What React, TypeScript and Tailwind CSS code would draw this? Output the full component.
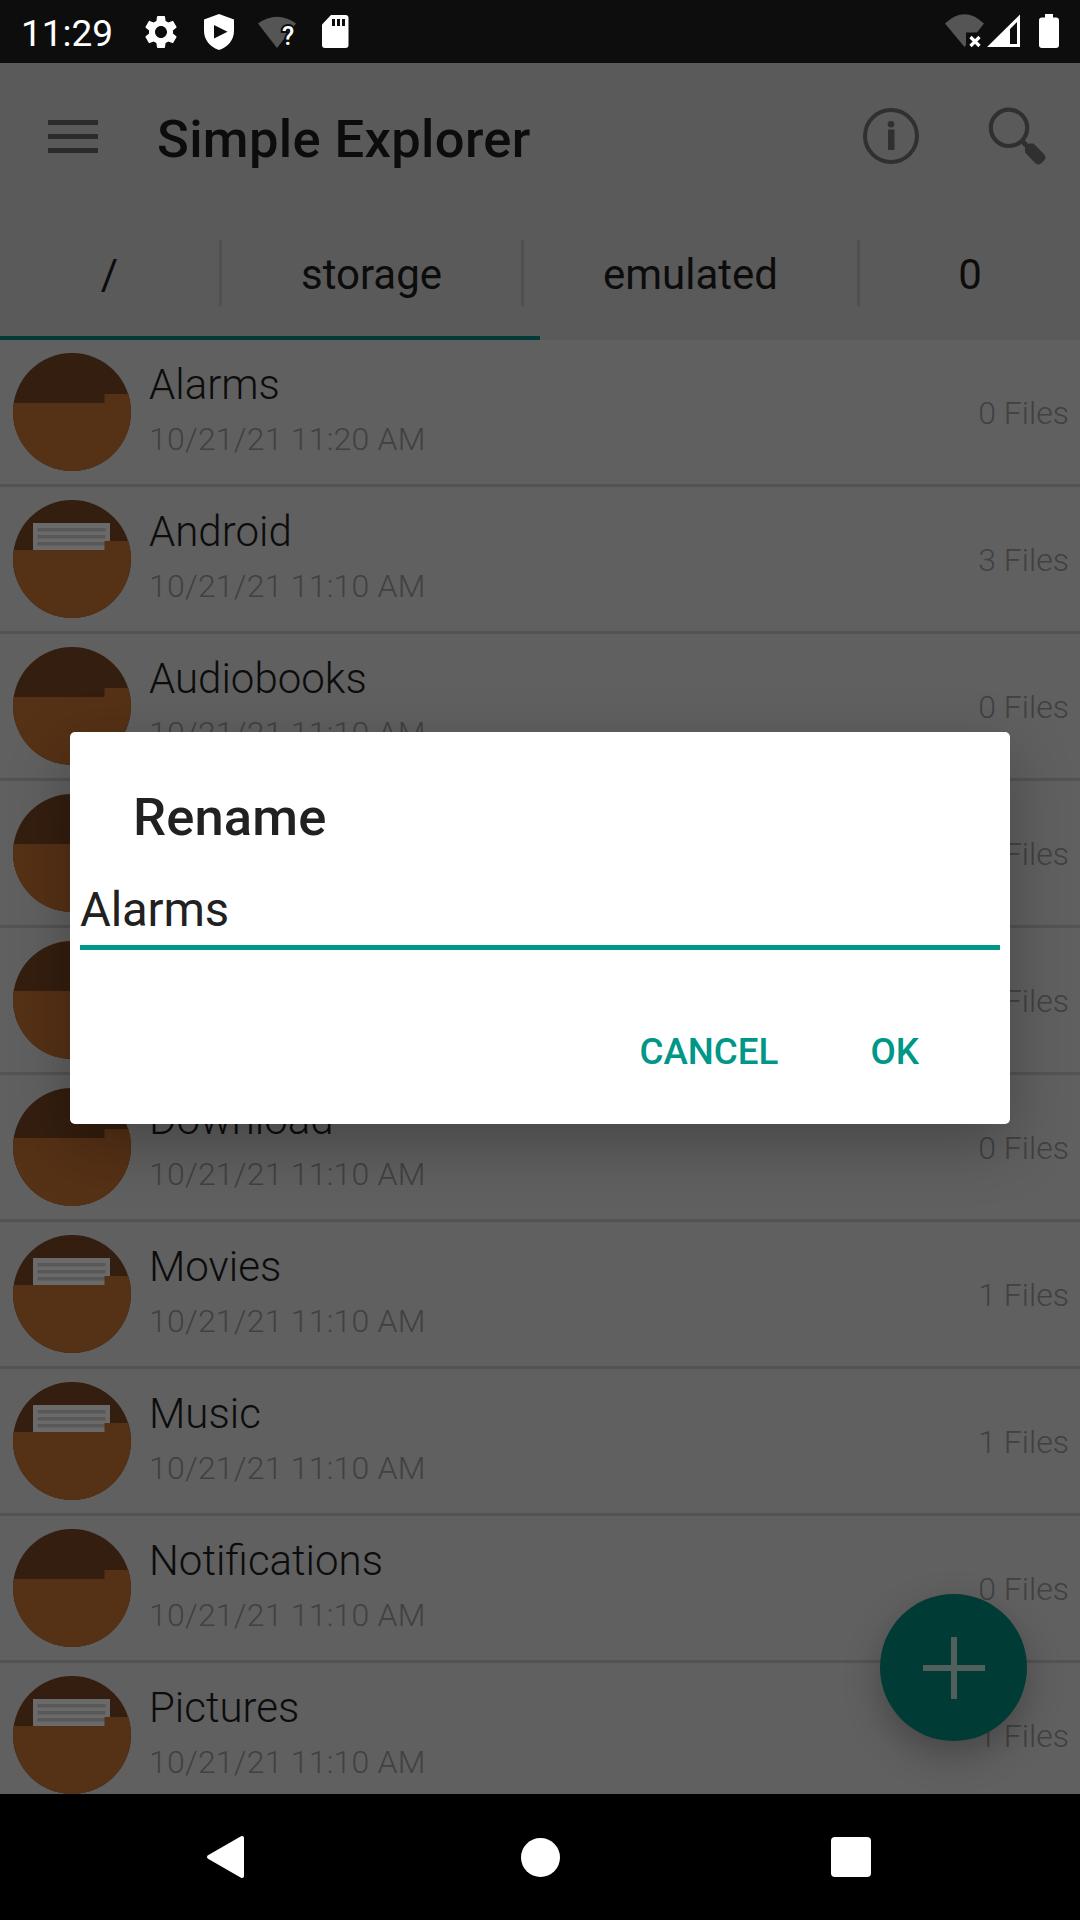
import React from "react";
import { MdSettings } from "react-icons/md";

type Entry = { name: string; date: string; files: string; full?: boolean };

const entries: Entry[] = [
  { name: "Alarms", date: "10/21/21 11:20 AM", files: "0 Files" },
  { name: "Android", date: "10/21/21 11:10 AM", files: "3 Files", full: true },
  { name: "Audiobooks", date: "10/21/21 11:10 AM", files: "0 Files" },
  { name: "DCIM", date: "10/21/21 11:10 AM", files: "0 Files" },
  { name: "Documents", date: "10/21/21 11:10 AM", files: "0 Files" },
  { name: "Download", date: "10/21/21 11:10 AM", files: "0 Files" },
  { name: "Movies", date: "10/21/21 11:10 AM", files: "1 Files", full: true },
  { name: "Music", date: "10/21/21 11:10 AM", files: "1 Files", full: true },
  { name: "Notifications", date: "10/21/21 11:10 AM", files: "0 Files" },
  { name: "Pictures", date: "10/21/21 11:10 AM", files: "1 Files", full: true },
];

function StatusBar() {
  return (
    <header className="flex h-[63px] shrink-0 items-center bg-[#0d0d0d] text-white">
      <span className="ml-[21px] w-[120px] pt-[4px] text-[37px] leading-none">11:29</span>
      <MdSettings className="size-10 shrink-0" />
      <svg className="ml-[18px] h-[63px] w-10 shrink-0" viewBox="199 0 40 63">
        <path fill="#fff" d="M219 14l15 5.5v11c0 9.500-6 16.500-15 19.500-9-3-15-10-15-19.500v-11z" />
        <path fill="#0d0d0d" d="M214 25v13.500l13.500-6.750z" />
      </svg>
      <svg className="ml-[18px] h-[63px] w-[40px] shrink-0" viewBox="257 0 40 63">
        <path fill="#555" d="M258 23.500Q277 10 296 23.500L277 48z" />
        <text x="282" y="45" fontSize="25" fontWeight="500" fill="#fff" stroke="#0d0d0d" strokeWidth="4" paintOrder="stroke">?</text>
      </svg>
      <svg className="ml-[18px] h-[63px] w-[40px] shrink-0" viewBox="315 0 40 63">
        <path fill="#fff" d="M331 15h14.500q3 0 3 3v27q0 3-3 3h-20.500q-3 0-3-3v-20.500z" />
        <path fill="#0d0d0d" d="M332 19h3v7h-3zM337 19h3v7h-3zM342 19h3v7h-3z" />
      </svg>
      <svg className="ml-auto h-[63px] w-[135px] shrink-0" viewBox="945 0 135 63">
        <path fill="#555" d="M945 23.500Q964.500 5 984 23.500L977 32.500H966V45L964.500 47z" />
        <path stroke="#fff" strokeWidth="3.200" d="M970.500 37l9 9M979.500 37l-9 9" />
        <path fill="#fff" fillRule="evenodd" d="M987 47L1020 14.500V47zM1010 29v15h7V22z" />
        <path fill="#fff" d="M1045 14h8v3.500h3q3 0 3 3V45q0 3-3 3h-14q-3 0-3-3V20.500q0-3 3-3h3z" />
      </svg>
    </header>
  );
}

function Toolbar() {
  return (
    <div className="flex h-[147px] shrink-0 items-center bg-[#5a5a5a]">
      <div className="ml-12 flex w-[50px] flex-col gap-[9px]">
        <i className="h-[5px] bg-[#2b2b2b]" />
        <i className="h-[5px] bg-[#2b2b2b]" />
        <i className="h-[5px] bg-[#2b2b2b]" />
      </div>
      <h1 className="ml-[59px] pt-[4px] text-[52.5px] font-medium leading-[62px] tracking-[0.35px] text-[#0c0c0c]">Simple Explorer</h1>
      <svg className="ml-auto h-[147px] w-[230px]" viewBox="850 63 230 147">
        <circle cx="891" cy="136" r="26" fill="none" stroke="#303030" strokeWidth="4" />
        <circle cx="891" cy="124.200" r="3.300" fill="#303030" />
        <path fill="#303030" d="M888 129.500h6.500V150H888z" />
        <circle cx="1009" cy="127.800" r="18.200" fill="none" stroke="#303030" strokeWidth="4.200" />
        <path stroke="#303030" strokeWidth="5" d="M1021 140l8 8" />
        <path
          fill="#303030"
          stroke="#303030"
          strokeWidth="2"
          strokeLinejoin="round"
          d="M1026 149l1-3 3-1.500h3L1043.500 155q2 2.500 0 4.500l-3 3q-2 2-4.500 0L1026 152z"
        />
      </svg>
    </div>
  );
}

function Tabs() {
  return (
    <nav className="relative flex h-[130px] shrink-0 items-start bg-[#5a5a5a] pt-[30px] text-[42px] text-[#0c0c0c]">
      <div className="flex h-[66px] w-[222px] items-center justify-center border-r-3 border-[#505050] pt-[3px]">/</div>
      <div className="flex h-[66px] w-[302px] items-center justify-center border-r-3 border-[#505050] pt-[3px]">storage</div>
      <div className="flex h-[66px] w-[336px] items-center justify-center border-r-3 border-[#505050] pt-[3px]">emulated</div>
      <div className="flex h-[66px] w-[220px] items-center justify-center pt-[3px]">0</div>
      <i className="absolute bottom-0 left-0 h-1 w-[540px] bg-[#003b35]" />
    </nav>
  );
}

function FolderIcon({ full }: { full?: boolean }) {
  return (
    <svg className="ml-[13px] size-[118px] shrink-0 rounded-full" viewBox="0 0 118 118">
      <path fill="#341e0f" d="M0 0h118v118H0z" />
      {full && (
        <>
          <path fill="#6a6a6a" d="M20 23h77v28H20z" />
          <path fill="#585858" d="M24.500 28h68v3.500h-68zM24.500 35h68v3.500h-68zM24.500 42h68v3.500h-68z" />
        </>
      )}
      <path fill="#553115" d="M0 50h91.500v-9H118v77H0z" />
    </svg>
  );
}

function Row({ entry }: { entry: Entry }) {
  return (
    <li className="flex h-[147px] shrink-0 items-center border-b-3 border-[#535353] font-light">
      <FolderIcon full={entry.full} />
      <div className="ml-[18px] flex flex-col">
        <span className="text-[42px] leading-[54px] text-[#0c0c0c]">{entry.name}</span>
        <span className="text-[32px] leading-[54px] tracking-[0.22px] text-[#414141]">{entry.date}</span>
      </div>
      <span className="ml-auto mr-[11px] pt-[1px] text-[32px] text-[#414141]">{entry.files}</span>
    </li>
  );
}

function RenameDialog() {
  return (
    <section className="absolute left-[70px] top-[732px] flex h-[392px] w-[940px] flex-col rounded-[5px] bg-white text-[#212121] shadow-[0_20px_60px_rgba(0,0,0,0.27)]">
      <h2 className="ml-[63px] mt-[54px] text-[52.5px] font-medium leading-[62px] tracking-[0.15px]">Rename</h2>
      <div className="mx-[10px] mt-[34px] h-[68px] border-b-5 border-[#009688] text-[47.25px] leading-[56px] tracking-[-0.15px]">Alarms</div>
      <div className="mt-[80px] flex justify-end gap-[92px] pr-[91px] text-[36.75px] font-medium leading-[44px] text-[#009688]">
        <button>CANCEL</button>
        <button>OK</button>
      </div>
    </section>
  );
}

export default function App() {
  return (
    <main className="relative flex h-[1920px] w-[1080px] flex-col overflow-hidden bg-[#606060] font-[Roboto,sans-serif]">
      <StatusBar />
      <Toolbar />
      <Tabs />
      <ul className="flex h-[1454px] shrink-0 flex-col overflow-hidden">
        {entries.map((e) => (
          <Row key={e.name} entry={e} />
        ))}
      </ul>
      <div className="absolute left-[880px] top-[1594px] flex size-[147px] items-center justify-center rounded-full bg-[#003b35] shadow-[0_14px_36px_rgba(0,0,0,0.27)]">
        <svg className="size-[62px]" viewBox="0 0 62 62">
          <path stroke="#52605d" strokeWidth="6" d="M31 0v62M0 31h62" />
        </svg>
      </div>
      <footer className="relative flex h-[126px] shrink-0 items-center bg-black">
        <svg className="ml-[205px] h-[44px] w-[40px]" viewBox="0 0 40 44">
          <path fill="#fff" stroke="#fff" strokeWidth="4" strokeLinejoin="round" d="M4 22L37 3v38z" />
        </svg>
        <i className="ml-[275.5px] size-[39px] rounded-full bg-white" />
        <i className="ml-[271.5px] size-10 rounded-[4px] bg-white" />
      </footer>
      <RenameDialog />
    </main>
  );
}
